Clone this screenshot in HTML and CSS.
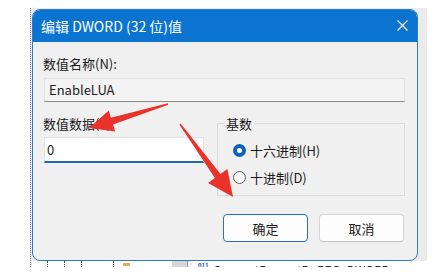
FILE: index.html
```html
<!DOCTYPE html>
<html lang="zh-CN">
<head>
    <meta charset="UTF-8">
    <title>编辑 DWORD (32 位)值</title>
    <link rel="stylesheet" href="styles.css">
</head>
<body>
    <div class="screen">
        <div class="regedit">
            <div class="dialog">
                <div class="titlebar">
                    <span class="title">编辑 DWORD (32 位)值</span>
                    <svg class="close" width="11" height="11" viewBox="0 0 11 11">
                        <path d="M0.5 0.5 L10.5 10.5 M10.5 0.5 L0.5 10.5" stroke="#fff" stroke-width="1.1" fill="none"/>
                    </svg>
                </div>

                <div class="dialog-body">
                    <label class="field-label">数值名称(N):</label>
                    <div class="text-box readonly">EnableLUA</div>

                    <div class="data-row">
                        <div class="data-col">
                            <label class="field-label">数值数据(V):</label>
                            <div class="text-box active">0</div>
                        </div>
                        <fieldset class="group-box">
                            <legend>基数</legend>
                            <div class="radio checked"><span class="dot"></span>十六进制(H)</div>
                            <div class="radio"><span class="dot"></span>十进制(D)</div>
                        </fieldset>
                    </div>

                    <div class="buttons">
                        <button class="btn primary">确定</button>
                        <button class="btn">取消</button>
                    </div>
                </div>
            </div>

            <!-- bits of the registry editor still showing under the dialog -->
            <div class="list-strip">
                <div class="tree-pane">
                    <span class="tick t1"></span>
                    <span class="tick t2"></span>
                    <span class="tick t3"></span>
                    <span class="tick t4"></span>
                    <span class="folder"></span>
                    <span class="scroll"></span>
                </div>
                <div class="value-pane">
                    <span class="reg-icon">011</span>
                    <span class="value-name">ConsentPromptBehaviorUser</span>
                    <span class="value-type">REG_DWORD</span>
                </div>
            </div>
        </div>

        <svg class="arrows" width="437" height="278" viewBox="0 0 437 278">
            <polygon points="167.8,103.2 110.9,117.7 108.8,110.5 89,128 115.2,131.6 113,124.4 168.2,104.8" fill="#e8322a"/>
            <polygon points="180.6,123.5 220.5,173.9 227.4,168.9 233,197 208,183 214.9,178 179.4,124.5" fill="#e8322a"/>
        </svg>
    </div>
</body>
</html>
```

FILE: styles.css
```css
/* Reset */
body, fieldset, legend, button {
    margin: 0;
    padding: 0;
    box-sizing: border-box;
}

body {
    font-family: "Noto Sans CJK SC", "Noto Sans", sans-serif;
    background: #fff;
    color: #1b1b1b;
}

.screen {
    position: relative;
    width: 437px;
    height: 278px;
    overflow: hidden;
    background: #fff;
    padding-top: 8px;
    box-sizing: border-box;
}

/* Registry editor behind the dialog */
.regedit {
    margin-left: 30px;
    width: 395px;
    background: #ebebeb;
    border-left: 1px dotted #6f7f98;
    padding-left: 1px;
    padding-top: 1px;
}

/* Dialog */
.dialog {
    width: 386px;
    height: 252px;
    background: #f0f0f0;
    border: 1px solid #2d7cc8;
    border-radius: 8px;
    overflow: hidden;
    display: flex;
    flex-direction: column;
    box-sizing: border-box;
}

.titlebar {
    height: 31px;
    flex: none;
    background: #0b74d1;
    color: #fff;
    display: flex;
    align-items: center;
    justify-content: space-between;
    padding: 0 9px 1px 8px;
}

.title {
    font-size: 14px;
}

.dialog-body {
    padding: 13px 12px 0 10px;
    font-size: 13px;
}

.field-label {
    display: block;
    line-height: 17px;
    height: 17px;
}

.text-box {
    margin-top: 6px;
    margin-left: 1px;
    height: 24px;
    line-height: 22px;
    padding-left: 4px;
    box-sizing: border-box;
    font-size: 13px;
}

.text-box.readonly {
    background: #f3f3f3;
    border: 1px solid #e2e2e2;
    border-bottom-color: #8a8a8a;
}

.text-box.active {
    height: 26px;
    line-height: 24px;
    margin-top: 5px;
    background: #fff;
    border: 1px solid #e4e4e4;
    border-bottom: 2px solid #1f6aab;
    padding-left: 2px;
}

.data-row {
    display: flex;
    align-items: flex-start;
    gap: 13px;
    margin-top: 13px;
}

.data-col {
    width: 161px;
}

.group-box {
    width: 188px;
    height: 81px;
    border: 1px solid #dcdcdc;
    padding: 5px 0 0 15px;
}

.group-box legend {
    font-size: 13px;
    padding: 0 2px;
    margin-left: -9px;
    line-height: 17px;
}

.radio {
    display: flex;
    align-items: center;
    height: 27px;
    font-size: 13px;
}

.radio .dot {
    width: 13px;
    height: 13px;
    border-radius: 50%;
    border: 1px solid #5d5d5d;
    box-sizing: border-box;
    margin-right: 4px;
    background: #fbfbfb;
}

.radio.checked .dot {
    border: 4px solid #0b63b8;
    background: #fff;
}

.buttons {
    display: flex;
    justify-content: flex-end;
    gap: 11px;
    margin-top: 18px;
    padding-right: 1px;
}

.btn {
    width: 85px;
    height: 28px;
    font-family: inherit;
    font-size: 13px;
    color: #1b1b1b;
    background: #fdfdfd;
    border: 1px solid #d3d3d3;
    border-bottom-color: #c2c2c2;
    border-radius: 4px;
}

.btn.primary {
    border-color: #2a72c0;
}

/* Strip of the list view below the dialog */
.list-strip {
    display: flex;
    height: 6px;
    overflow: hidden;
}

.tree-pane {
    width: 155px;
    background: #fff;
    border-right: 1px solid #9a9a9a;
    display: flex;
}

.tick {
    width: 1px;
    height: 6px;
    border-left: 1px dotted #555;
}

.t1 { margin-left: 15px; }
.t2 { margin-left: 15px; }
.t3 { margin-left: 15px; }
.t4 { margin-left: 30px; }

.folder {
    width: 7px;
    height: 3px;
    margin: 2px 0 0 8px;
    background: #e2b14a;
}

.scroll {
    width: 15px;
    height: 6px;
    margin-left: auto;
    background: #d6d6d6;
}

.value-pane {
    flex: 1;
    background: #fff;
    border-left: 4px solid #f0f0f0;
    display: flex;
    align-items: flex-start;
    font-size: 12px;
    line-height: 14px;
    color: #222;
    padding-top: 2px;
}

.reg-icon {
    margin-left: 6px;
    width: 12px;
    font-size: 6px;
    line-height: 6px;
    color: #2152b0;
    font-weight: bold;
}

.value-name {
    margin-left: 3px;
    width: 98px;
    overflow: hidden;
    white-space: nowrap;
}

.value-type {
    margin-left: 6px;
    white-space: nowrap;
}

/* Red pointer arrows drawn over the screenshot */
.arrows {
    position: absolute;
    left: 0;
    top: 0;
}
```
